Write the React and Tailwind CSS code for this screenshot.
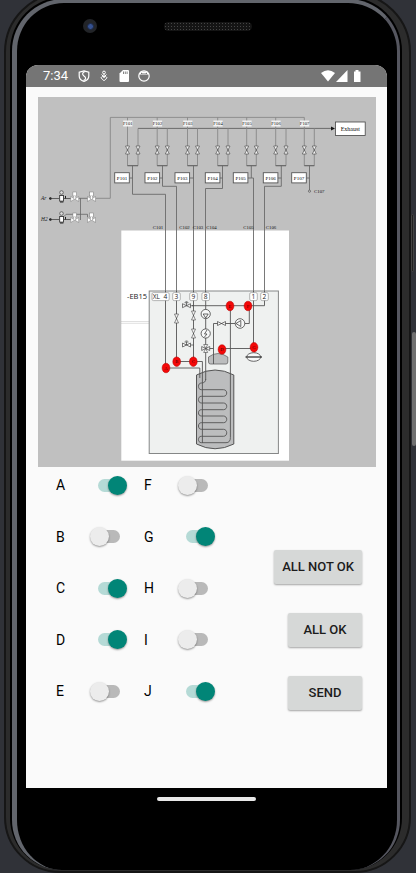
import React, { useState } from "react";

const FLOW_LINES = [
  { n: 1, left: 127.5, right: 138, mid: 132.5, box: 114.7, path: "V194.3H165.5V292" },
  { n: 2, left: 157.2, right: 167.3, mid: 162.5, box: 145, path: "V186.3H176.5V292" },
  { n: 3, left: 187.5, right: 197.5, mid: 193.5, box: 175, path: "V292" },
  { n: 4, left: 217.7, right: 228, mid: 222.5, box: 205.3, path: "V188.5H205.5V292" },
  { n: 5, left: 246.7, right: 256.3, mid: 251.3, box: 233.3, path: "V178H253.5V292" },
  { n: 6, left: 275.7, right: 286, mid: 281.3, box: 263.3, path: "V186.3H264.5V292" },
  { n: 7, left: 304.3, right: 314.3, mid: 309.5, box: 291.7, path: "V190" },
];

const PIPE_TAGS = [
  ["C101", 158], ["C102", 184.5], ["C103", 198], ["C104", 211.5], ["C105", 248.5], ["C106", 271],
];

const PORTS = [["3", 176.5], ["9", 193.5], ["8", 205.7], ["1", 253.5], ["2", 264.5]];

const MARKERS = [
  ["A", 166, 368], ["B", 176.7, 361.7], ["C", 193.3, 361.7], ["D", 222, 349.5],
  ["E", 230, 306], ["F", 248, 306], ["G", 254, 347.3],
];

function Valve({ x, y, h = 4, w = 2, fill = "#f4f4f4" }) {
  return (
    <path
      d={`M${x - w} ${y - h}H${x + w}L${x - w} ${y + h}H${x + w}Z`}
      fill={fill} stroke="#444" strokeWidth="0.6"
    />
  );
}

function SideValve({ x, y, w = 4, h = 2 }) {
  return (
    <path
      d={`M${x - w} ${y - h}V${y + h}L${x + w} ${y - h}V${y + h}Z`}
      fill="#f4f4f4" stroke="#444" strokeWidth="0.7"
    />
  );
}

function ActuatedValve({ x, y }) {
  return (
    <g>
      <SideValve x={x} y={y} />
      <path d={`M${x} ${y}V${y - 3}M${x - 2} ${y - 3}H${x + 2}M${x - 1} ${y - 4}H${x + 1}M${x + 4} ${y}H193.5`} stroke="#444" strokeWidth="0.7" />
    </g>
  );
}

function GasSource({ y, name }) {
  return (
    <g>
      <text x="41" y={y + 1.7} fontSize="5.4" fontStyle="italic" fill="#222">{name}</text>
      <circle cx="50.4" cy={y} r="1.2" fill="#111" />
      <path d={`M50 ${y}H59M64 ${y}H72`} stroke="#333" strokeWidth="0.7" />
      <circle cx="61.5" cy={y - 6} r="1.8" fill="#ddd" stroke="#333" strokeWidth="0.6" />
      <rect x="59.7" y={y - 3} width="3.8" height="5.6" fill="#fff" stroke="#222" strokeWidth="0.8" />
      <path d={`M60 ${y + 3.5}H63.4M65.5 ${y - 2.6}V${y}`} stroke="#222" strokeWidth="1" />
      {[74.7, 91.5].map((x) => (
        <g key={x}>
          <path d={`M${x - 4} ${y - 2}V${y + 3}L${x + 4} ${y - 2}V${y + 3}Z`} fill="#fff" stroke="#777" strokeWidth="0.5" />
          <rect x={x - 1.8} y={y - 6.5} width="3.6" height="4" fill="#fff" stroke="#777" strokeWidth="0.5" />
          <path d={`M${x} ${y - 2.5}V${y + 0.5}`} stroke="#fff" strokeWidth="1" />
        </g>
      ))}
    </g>
  );
}

function Diagram() {
  return (
    <svg viewBox="38 97 338 370" className="block w-full bg-[#c0c0c0]" fill="none" role="img" aria-label="Piping diagram" fontFamily='"Liberation Serif", serif'>
      <rect x="121.3" y="230.5" width="167.7" height="230.2" fill="#fff" />
      <rect x="149.2" y="291" width="129.2" height="162.5" fill="#eff1f0" stroke="#858787" />

      <path d="M96 198.3H110.3V117.4H304.3" stroke="#888" strokeWidth="0.9" />
      <path d="M138 128.4H332" stroke="#555" strokeWidth="0.8" />
      <path d="M331 126.4L335 128.4L331 130.4Z" fill="#111" />
      <rect x="335.4" y="122" width="29.8" height="13.4" fill="#fff" stroke="#444" strokeWidth="0.8" />
      <text x="350.3" y="130.8" fontSize="6" textAnchor="middle" fill="#111">Exhaust</text>

      <path d="M80.5 198.3V220M64 216.5L66 214.3H87.5V217M78 198.3H88" stroke="#666" strokeWidth="0.8" />
      <GasSource y={198.5} name="Ar" />
      <GasSource y={219.5} name="H2" />

      {FLOW_LINES.map((f) => (
        <g key={f.n}>
          <path d={`M${f.left} 117.4V165.7H${f.right}V128.4`} stroke="#888" strokeWidth="0.9" />
          <path d={`M${f.left} 165.7H${f.right}`} stroke="#555" strokeWidth="0.8" />
          <rect x={f.left - 4.3} y="120.5" width="9.2" height="6" fill="#f2f2f2" />
          <text x={f.left + 0.3} y="125.4" fontSize="4.6" textAnchor="middle" fill="#111">{`F10${f.n}`}</text>
          <Valve x={f.left} y={150} />
          <Valve x={f.right} y={150} />
          <path d={`M${f.mid} 165.7${f.path}M${f.box + 14.6} 178H${f.mid}`} stroke="#6a6a6a" strokeWidth="0.9" />
          <rect x={f.box} y="172.7" width="14.6" height="10.2" fill="#fff" stroke="#555" strokeWidth="0.9" />
          <text x={f.box + 7.3} y="179.7" fontSize="5" textAnchor="middle" fill="#000">{`P10${f.n}`}</text>
        </g>
      ))}
      <circle cx="309.5" cy="191.2" r="1.1" stroke="#555" strokeWidth="0.7" />
      <text x="319.3" y="193.2" fontSize="4.8" textAnchor="middle" fill="#111">C107</text>
      {PIPE_TAGS.map(([t, x]) => (
        <text key={t} x={x} y="229.3" fontSize="4.8" textAnchor="middle" fill="#111">{t}</text>
      ))}

      <path d="M121.5 321.5H149M121.5 323.3H149" stroke="#999" strokeWidth="0.6" strokeDasharray="1 1" />

      <path d="M196.500 375Q215 365 233.800 375V444Q215 453.500 196.500 444Z" fill="#bcbdbe" stroke="#555" />
      <path d="M208.500 357Q218 350 227.800 357V362Q227.800 364 226 364H210.500Q208.500 364 208.500 362Z" fill="#bcbdbe" stroke="#666" strokeWidth="0.8" />

      <g stroke="#555" strokeWidth="0.9">
        <path d="M165.500 291V368H199.800V378" />
        <path d="M176.500 291V361.500H202.400V443" />
        <path d="M193.500 291V361.500M205.700 291V380" />
        <path d="M253.500 291V347M264.500 291V305.700H192" />
        <path d="M249.300 306V323.500H213.500V364M205.700 348.500H213.500M222 348.500H254" />
        <path d="M230.4 306V437.5Q230.4 442.7 226 442.7H201.3C197.5 442.7 197.5 436.3 201.3 436.3H223.5C227.8 436.3 227.8 429.3 223.5 429.3H201.3C197.5 429.3 197.5 422.7 201.3 422.7H223.5C227.8 422.7 227.8 416 223.5 416H201.3C197.5 416 197.5 409.7 201.3 409.7H223.5C227.8 409.7 227.8 403 223.5 403H201.3C197.5 403 197.5 396.3 201.3 396.3H223.5C227.8 396.3 227.8 389.7 223.5 389.7H201.3C197.5 389.7 197.5 383 201.3 383Q205.7 383 205.7 379" />
      </g>

      <Valve x={176.5} y={318.5} h={4.5} />
      <Valve x={193.5} y={315.5} h={4.5} />
      <Valve x={193.5} y={333.5} h={4.5} />
      <ActuatedValve x={186.5} y={305.7} />
      <ActuatedValve x={186.5} y={345} />
      <SideValve x={221.5} y={323.5} />
      <SideValve x={205.7} y={348.5} />
      <Valve x={205.7} y={348.5} />
      <g fill="#f7f8f8" stroke="#444" strokeWidth="0.8">
        <circle cx="205.7" cy="314" r="4.6" />
        <path d="M203.2 314H208.2L205.7 318Z" />
        <circle cx="205.7" cy="333.5" r="4.6" />
        <path d="M207 330L204.5 334H207L204.5 337" />
        <circle cx="240" cy="323.5" r="4.8" />
        <path d="M240.8 320.5V326.5L236 323.5Z" />
        <ellipse cx="253.7" cy="357" rx="7" ry="4.3" />
        <path d="M245.5 357H262" strokeWidth="1.4" />
      </g>

      {MARKERS.map(([t, x, y]) => (
        <g key={t}>
          <ellipse cx={x} cy={y} rx="3.9" ry="4.8" fill="#f40808" stroke="#b00000" strokeWidth="0.5" />
          <text x={x} y={y + 1.7} fontSize="4.6" textAnchor="middle" fill="#400">{t}</text>
        </g>
      ))}

      <g fontFamily='"Open Sans", "Noto Sans", sans-serif' fill="#222">
        <text x="127" y="298.9" fontSize="7.5">-EB15</text>
        <rect x="152" y="292.6" width="17.2" height="8" rx="1.5" fill="#fff" stroke="#888" strokeWidth="0.6" />
        <text x="152.8" y="299" fontSize="6.6">XL</text>
        <text x="165.5" y="299" fontSize="6.6" textAnchor="middle">4</text>
        {PORTS.map(([t, x]) => (
          <g key={t}>
            <rect x={x - 3.8} y="292.6" width="7.6" height="8" rx="1.5" fill="#fff" stroke="#888" strokeWidth="0.6" />
            <text x={x} y="299" fontSize="6.6" textAnchor="middle">{t}</text>
          </g>
        ))}
      </g>
    </svg>
  );
}

function StatusBar() {
  return (
    <header className="flex h-[22px] items-center bg-[#757575] pr-[26px] pl-[17px] text-white">
      <span className="w-[35px] text-[13px] leading-4">7:34</span>
      <div className="flex flex-1 items-center gap-2">
        <svg className="h-3 w-3" viewBox="0 0 12 12" fill="none" stroke="#fff" strokeWidth="1.2" aria-hidden="true">
          <path d="M6 .8L10.8 2.2V6C10.8 8.8 8.5 10.6 6 11.4C3.5 10.6 1.2 8.8 1.2 6V2.2Z" />
          <path d="M7.500 1.500C4.500 2 3.500 4 6 6C8.500 7.500 8 9.500 5.500 10.500" />
        </svg>
        <svg className="h-3 w-3" viewBox="0 0 12 12" fill="none" stroke="#fff" strokeWidth="1" aria-hidden="true">
          <circle cx="6" cy="2.5" r="1.4" />
          <path d="M6 4V6.500M3.500 4.500L6 7L8.500 4.500M6 10.800L3 7.800L4.500 6.300L6 7.800L7.500 6.300L9 7.800Z" />
        </svg>
        <svg className="h-3 w-3" viewBox="0 0 12 12" aria-hidden="true">
          <path fill="#fff" d="M5 0H10Q11 0 11 1V11Q11 12 10 12H2.5Q1.5 12 1.5 11V3.5Z" />
          <path stroke="#757575" strokeWidth="0.9" d="M5.500 1.500V4M7.300 1.500V4M9.100 1.500V4" />
        </svg>
        <svg className="h-3 w-3" viewBox="0 0 12 12" aria-hidden="true">
          <circle cx="6" cy="6" r="5.2" fill="none" stroke="#fff" strokeWidth="1.2" />
          <path fill="#fff" d="M1 4.5L2.5 1.5H9.5L11 4.5Z" />
          <path fill="#757575" d="M3 2.5L4.5 3.5H7.500L9 2.500V4H3Z" />
        </svg>
      </div>
      <svg className="h-3 w-[40px]" viewBox="0 0 40 12" fill="#fff" aria-hidden="true">
        <path d="M0 3Q7 -2.5 14 3L7 11.5Z" />
        <path d="M26.5 0V12H15Z" />
        <path d="M34.5 0H37.5V1.5H39.5V12H33V1.5H34.5Z" />
      </svg>
    </header>
  );
}

const COLUMNS = [["A", "B", "C", "D", "E"], ["F", "G", "H", "I", "J"]];

function Switch({ name, checked, onChange }) {
  return (
    <label className="flex h-6 w-16 items-center justify-between text-sm text-black">
      {name}
      <input
        type="checkbox"
        role="switch"
        checked={checked}
        onChange={onChange}
        className="relative h-[13px] w-[22px] appearance-none rounded-full bg-[#b9b9b9] checked:bg-[#b5dad6] after:absolute after:-top-[3px] after:-left-[8px] after:h-[19px] after:w-[19px] after:rounded-full after:bg-[#ececec] after:shadow-[0_1px_2px_rgba(0,0,0,0.4)] checked:after:left-[10px] checked:after:bg-[#018577]"
      />
    </label>
  );
}

function ActionButton({ children, onClick }) {
  return (
    <button
      type="button"
      onClick={onClick}
      className="h-[34px] min-w-[74px] rounded-xs bg-[#d6d8d7] px-2 text-[13px] font-medium text-[#1c1c1c] shadow-[0_1px_2px_rgba(0,0,0,0.35)]"
    >
      {children}
    </button>
  );
}

export default function App() {
  const [on, setOn] = useState({ A: true, C: true, D: true, G: true, J: true });
  const setAll = (value) => setOn(Object.fromEntries(COLUMNS.flat().map((k) => [k, value])));

  return (
    <div className="relative min-h-screen overflow-hidden bg-[#303238] pr-[5px] pl-1 font-[Roboto,'Liberation_Sans',sans-serif]">
      <div className="absolute top-[214px] right-[2px] h-[58px] w-[3px] rounded-sm border border-[#444] bg-[#222]" />
      <div className="absolute top-[332px] right-0 h-[114px] w-1 rounded-sm border-2 border-[#707070] bg-[#333]" />
      <div className="relative -mt-2 rounded-t-[60px] rounded-b-[56px] border-2 border-[#161616] bg-[#2c2c2c] pt-[3px] pr-[7px] pb-px pl-1">
        <div className="rounded-t-[54px] rounded-b-[52px] border-t-2 border-r-2 border-l-2 border-black bg-black">
          <div className="rounded-t-[52px] rounded-b-[50px] border-t-4 border-r-[3px] border-l-[5px] border-t-[#62656c] border-r-[#55565f] border-l-[#62656c] bg-black pr-[10px] pb-[69px] pl-[9px]">
            <div className="flex h-[62px] items-start pt-4 pl-[57px]">
              <div className="flex h-[14px] w-[14px] items-center justify-center rounded-full bg-[#222428]">
                <div className="h-[7px] w-[7px] rounded-full border border-[#1c2744] bg-[#355190]" />
              </div>
              <div className="mt-[3px] ml-[67px] h-[9px] w-[88px] rounded-full bg-[#141414] bg-[radial-gradient(#454545_1px,transparent_1px)] bg-[size:3px_3px]" />
            </div>
            <main className="overflow-hidden rounded-t-xl bg-[#fafafa]">
              <StatusBar />
              <div className="pt-[10px] pr-[11px] pl-3">
                <Diagram />
              </div>
              <div className="flex justify-between pt-[6px] pr-[25px] pb-[78px] pl-[30px]">
                <div className="flex h-[230px] gap-6">
                  {COLUMNS.map((names) => (
                    <div key={names[0]} className="flex flex-col justify-between">
                      {names.map((name) => (
                        <Switch
                          key={name}
                          name={name}
                          checked={!!on[name]}
                          onChange={(e) => setOn({ ...on, [name]: e.target.checked })}
                        />
                      ))}
                    </div>
                  ))}
                </div>
                <div className="flex flex-col items-end gap-[29px] pt-[77px]">
                  <ActionButton onClick={() => setAll(false)}>ALL NOT OK</ActionButton>
                  <ActionButton onClick={() => setAll(true)}>ALL OK</ActionButton>
                  <ActionButton>SEND</ActionButton>
                </div>
              </div>
            </main>
            <div className="mx-auto mt-[9px] h-1 w-[99px] rounded-full bg-[#e8e8e8]" />
          </div>
        </div>
      </div>
    </div>
  );
}
